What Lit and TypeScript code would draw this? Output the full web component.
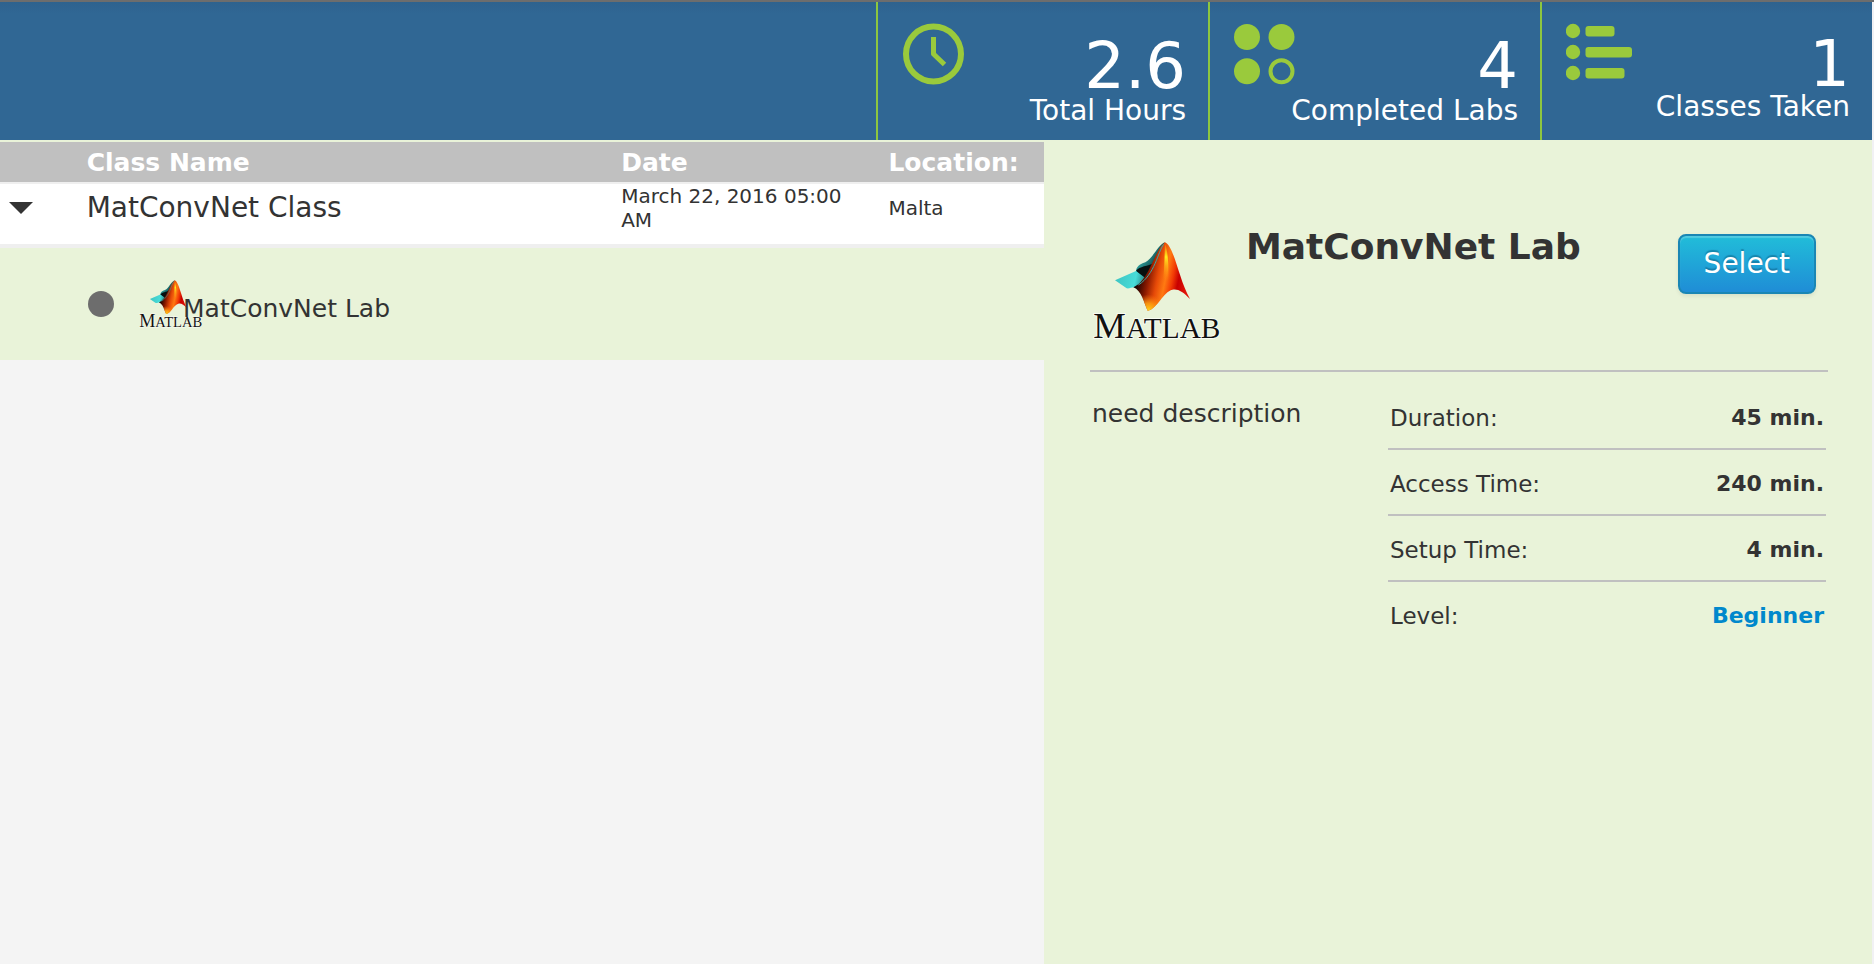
import { LitElement, html, css, svg } from "lit";
import { customElement, property } from "lit/decorators.js";

@customElement("matlab-logo")
class MatlabLogo extends LitElement {
  static styles = css`
    :host { display: block; }
    svg { display: block; width: 100%; height: auto; overflow: visible; }
    .word {
      font-family: "Liberation Serif", serif;
      fill: #111;
      stroke: #fff;
      stroke-width: 6px;
      stroke-opacity: 0.7;
      paint-order: stroke;
    }
    .big { font-size: 110px; }
    .small { font-size: 88px; }
  `;

  render() {
    return html`
      <svg viewBox="24 21 381 294" role="img" aria-label="Matlab">
        <defs>
          <linearGradient id="flame" gradientUnits="userSpaceOnUse" x1="158" y1="120" x2="305" y2="150">
            <stop offset="0" stop-color="#120000" />
            <stop offset="0.22" stop-color="#8c1a00" />
            <stop offset="0.4" stop-color="#e64a08" />
            <stop offset="0.56" stop-color="#ff7a12" />
            <stop offset="0.7" stop-color="#f23a05" />
            <stop offset="0.82" stop-color="#c80000" />
            <stop offset="1" stop-color="#e01208" />
          </linearGradient>
          <linearGradient id="ridge" x1="0" y1="0" x2="0" y2="1">
            <stop offset="0" stop-color="#ff9a00" stop-opacity="0.4" />
            <stop offset="0.35" stop-color="#ffee20" />
            <stop offset="1" stop-color="#ff8a10" stop-opacity="0" />
          </linearGradient>
          <radialGradient id="base" gradientUnits="userSpaceOnUse" cx="190" cy="226" r="48">
            <stop offset="0" stop-color="#ffd21a" />
            <stop offset="0.45" stop-color="#ffa012" stop-opacity="0.85" />
            <stop offset="1" stop-color="#ff7a10" stop-opacity="0" />
          </radialGradient>
          <linearGradient id="sea" gradientUnits="userSpaceOnUse" x1="95" y1="130" x2="185" y2="150">
            <stop offset="0" stop-color="#3fc6c4" />
            <stop offset="0.6" stop-color="#48dcd8" />
            <stop offset="1" stop-color="#1c6f70" />
          </linearGradient>
          <linearGradient id="slope" gradientUnits="userSpaceOnUse" x1="165" y1="75" x2="215" y2="105">
            <stop offset="0" stop-color="#2fa09e" />
            <stop offset="0.5" stop-color="#1c6c6c" />
            <stop offset="1" stop-color="#051616" />
          </linearGradient>
        </defs>
        <path fill="url(#slope)" d="M153 106C157 90 170 86 181 82C204 70 220 28 240 22C226 60 210 118 184 140L151 125Z" />
        <path fill="#071010" d="M153 108C164 93 188 94 208 84C202 104 192 124 180 132Z" />
        <path fill="url(#sea)" d="M90 136L153 108L182 130C174 142 162 152 147 157C139 157 134 161 125 160Z" />
        <path fill="url(#flame)" d="M240 22C268 34 280 130 315 192C295 170 278 160 262 164C235 170 215 224 188 227C177 205 170 166 145 157C192 138 208 46 240 22Z" />
        <path fill="url(#ridge)" d="M240 26C248 44 251 86 250 132C245 142 239 142 235 132C238 100 239 60 240 26Z" />
        <path fill="url(#base)" d="M262 164C235 170 215 224 188 227C180 210 174 184 163 170Z" />
        <path fill="none" stroke="#3fa5a3" stroke-width="3" d="M236 28C218 52 210 118 160 150" />
        <text class="word" x="25" y="308"><tspan class="big">M</tspan><tspan class="small">ATLAB</tspan></text>
      </svg>
    `;
  }
}

const clockIcon = svg`
  <g fill="none" stroke="#9aca3c">
    <circle cx="31.500" cy="32" r="27.5" stroke-width="6" />
    <path stroke-width="5" stroke-linejoin="round" d="M31.500 15V32L42.500 42.500" />
  </g>`;

const dotsIcon = svg`
  <g fill="#9aca3c">
    <circle cx="13" cy="15" r="13" />
    <circle cx="47.500" cy="15" r="13" />
    <circle cx="13" cy="49.300" r="13" />
    <circle cx="47.500" cy="49.300" r="11" fill="none" stroke="#9aca3c" stroke-width="4" />
  </g>`;

const listIcon = svg`
  <g fill="#9aca3c">
    <circle cx="7" cy="9" r="7.200" />
    <circle cx="7" cy="30" r="7.200" />
    <circle cx="7" cy="51" r="7.200" />
    <rect x="19.500" y="4" width="29" height="10.500" rx="3" />
    <rect x="19.500" y="25" width="46.500" height="10.500" rx="3" />
    <rect x="19.500" y="46" width="39" height="10.500" rx="3" />
  </g>`;

@customElement("stat-tile")
class StatTile extends LitElement {
  @property() value = "";
  @property() label = "";
  @property({ attribute: false }) icon: unknown;

  static styles = css`
    :host {
      box-sizing: border-box;
      display: flex;
      justify-content: space-between;
      min-height: 138px;
      padding: 20px 22px 14px 24px;
      border-left: 2px solid #8dc63f;
      color: #fff;
    }
    .icon { width: 66px; height: 64px; flex: none; }
    .figures { margin: 14px 0 0 -60px; text-align: right; white-space: nowrap; }
    .value { font-size: 64px; line-height: 60px; }
    .label { font-size: 28px; line-height: 30px; }
    :host([compact]) .figures { margin-top: 12px; }
    :host([compact]) .label { line-height: 26px; }
  `;

  render() {
    return html`
      <svg class="icon" viewBox="0 0 66 64" aria-hidden="true">${this.icon}</svg>
      <div class="figures">
        <div class="value">${this.value}</div>
        <div class="label">${this.label}</div>
      </div>
    `;
  }
}

@customElement("app-root")
class AppRoot extends LitElement {
  static styles = css`
    * { box-sizing: border-box; }
    :host {
      display: flex;
      flex-direction: column;
      min-height: 100vh;
      box-sizing: border-box;
      border-top: 2px solid #6d6d6d;
      background: #f1f1f4;
      color: #333;
      font-family: Verdana, "DejaVu Sans", sans-serif;
    }
    .topbar {
      display: grid;
      grid-template-columns: 876fr 332fr 332fr 332fr;
      margin-right: 2px;
      background: linear-gradient(#2e628e, #306794 12px);
    }
    .content {
      flex: 1;
      display: grid;
      grid-template-columns: 1044fr 828fr;
      margin-right: 2px;
      padding-top: 2px;
      background: #e9f3d9;
    }
    .list { background: #f4f4f4; }
    .classes {
      width: 100%;
      table-layout: fixed;
      border-spacing: 0;
      text-align: left;
    }
    .col-toggle { width: 8.3%; }
    .col-name { width: 51.2%; }
    .col-date { width: 25.6%; }
    .classes th {
      height: 42px;
      padding: 2px 0 0;
      border-bottom: 2px solid #efefef;
      background: #c0c0c0;
      color: #fff;
      font-size: 25px;
      line-height: 30px;
    }
    .class-row td {
      height: 64px;
      padding: 0 16px 12px 0;
      border-bottom: 4px solid #efefef;
      background: #fff;
      font-size: 20px;
      line-height: 24px;
    }
    .class-row .class-name { font-size: 28px; line-height: 36px; }
    .toggle {
      display: block;
      width: 24px;
      height: 12px;
      margin-left: 9px;
      padding: 0;
      border: 0;
      background: #333;
      clip-path: polygon(0 0, 100% 0, 50% 100%);
      cursor: pointer;
    }
    .lab-cell { padding: 0; background: #e9f3d9; }
    .lab {
      display: flex;
      align-items: center;
      height: 112px;
      padding-left: 88px;
    }
    .status {
      width: 26px;
      height: 26px;
      margin-right: 25px;
      border-radius: 50%;
      background: #6d6d6d;
    }
    .lab-logo { width: 63px; }
    .lab-name {
      position: relative;
      margin-left: -19px;
      padding-top: 10px;
      font-size: 25px;
      line-height: 32px;
    }
    .details { padding: 83px 44px 40px 46px; }
    .details-head {
      display: flex;
      align-items: flex-start;
      padding: 0 12px 30px 3px;
    }
    .details-logo { flex: none; width: 127px; margin: 17px 26px 0 0; }
    .title { flex: 1; margin: 0; font-size: 36px; line-height: 44px; }
    .select {
      margin-top: 9px;
      padding: 0 24px;
      border: 2px solid #1a86b4;
      border-radius: 8px;
      background: linear-gradient(#21bdd9, #1f8dd6);
      box-shadow: inset 0 2px 1px rgba(255, 255, 255, 0.22), 0 2px 4px rgba(0, 0, 0, 0.08);
      color: #fff;
      font: inherit;
      font-size: 28px;
      line-height: 56px;
      text-shadow: 0 -2px 1px rgba(0, 60, 90, 0.35);
      cursor: pointer;
    }
    .details-body {
      display: grid;
      grid-template-columns: 298fr 438fr;
      padding: 12px 2px 0 0;
      border-top: 2px solid #c0c0c0;
    }
    .description { margin: 0; padding: 14px 8px 0 2px; font-size: 25px; line-height: 32px; }
    .facts { margin: 0; }
    .fact {
      display: flex;
      justify-content: space-between;
      padding: 20px 2px 16px;
      border-bottom: 2px solid #c0c0c0;
      font-size: 23px;
      line-height: 28px;
    }
    .fact:last-child { border-bottom: 0; }
    .fact dd { margin: 0; font-size: 22px; font-weight: bold; }
    .level { color: #0088cc; text-decoration: none; }
  `;

  private facts = [
    { name: "Duration:", value: "45 min." },
    { name: "Access Time:", value: "240 min." },
    { name: "Setup Time:", value: "4 min." },
    { name: "Level:", value: html`<a class="level" href="#">Beginner</a>` },
  ];

  render() {
    return html`
      <header class="topbar">
        <div></div>
        <stat-tile value="2.6" label="Total Hours" .icon=${clockIcon}></stat-tile>
        <stat-tile value="4" label="Completed Labs" .icon=${dotsIcon}></stat-tile>
        <stat-tile compact value="1" label="Classes Taken" .icon=${listIcon}></stat-tile>
      </header>
      <main class="content">
        <section class="list">
          <table class="classes">
            <colgroup>
              <col class="col-toggle" />
              <col class="col-name" />
              <col class="col-date" />
              <col />
            </colgroup>
            <thead>
              <tr>
                <th></th>
                <th scope="col">Class Name</th>
                <th scope="col">Date</th>
                <th scope="col">Location:</th>
              </tr>
            </thead>
            <tbody>
              <tr class="class-row">
                <td><button class="toggle" aria-label="Collapse" aria-expanded="true"></button></td>
                <td class="class-name">MatConvNet Class</td>
                <td>March 22, 2016 05:00 AM</td>
                <td>Malta</td>
              </tr>
              <tr>
                <td class="lab-cell" colspan="4">
                  <div class="lab">
                    <span class="status"></span>
                    <matlab-logo class="lab-logo"></matlab-logo>
                    <span class="lab-name">MatConvNet Lab</span>
                  </div>
                </td>
              </tr>
            </tbody>
          </table>
        </section>
        <section class="details">
          <div class="details-head">
            <matlab-logo class="details-logo"></matlab-logo>
            <h1 class="title">MatConvNet Lab</h1>
            <button class="select">Select</button>
          </div>
          <div class="details-body">
            <p class="description">need description</p>
            <dl class="facts">
              ${this.facts.map(
                (f) => html`<div class="fact"><dt>${f.name}</dt><dd>${f.value}</dd></div>`
              )}
            </dl>
          </div>
        </section>
      </main>
    `;
  }
}
